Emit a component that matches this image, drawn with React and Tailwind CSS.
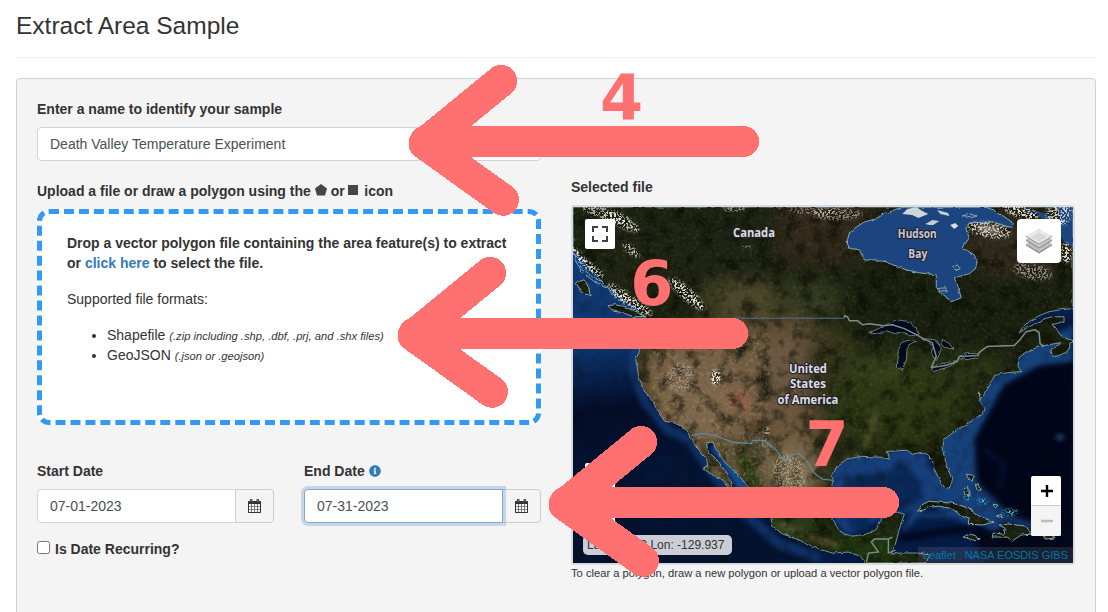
import React from "react";
import { FaInfoCircle } from "react-icons/fa";

const LAND =
  "M573 207H1074V309L1062 310 1050 312 1040 316 1030 322 1020 333 1034 325 1046 319 1053 317 1065 317 1065 322 1053 325 1058 331 1063 337 1074 341 1068 352 1060 356 1053 357 1052 350 1062 343 1050 345 1040 347 1033 350 1026 354 1020 358 1019 366 1023 372 1010 373 997 375 992 382 987 390 984 396 980 402 985 408 983 415 972 422 958 430 945 440 943 450 948 467 953 482 950 489 945 488 940 480 935 470 933 460 928 455 922 453 913 455 908 451 888 452 890 460 883 458 862 457 847 460 835 470 832 477 833 483 830 500 832 518 835 523 843 534 853 537 870 535 877 530 882 520 886 514 898 513 905 515 900 530 896 545 892 555 900 554 918 554 930 556 927 564H867L860 557 850 553 833 554 812 548 798 540 783 535 773 527 771 518 768 508 757 496 747 486 738 475 725 463 718 452 713 443 707 443 708 452 717 460 723 468 730 480 732 487 738 498 731 492 722 480 712 475 703 469 708 467 707 460 700 452 692 440 687 432 677 424 665 422 658 412 652 400 643 390 638 373 636 360 640 350 643 335 646 319 638 310 628 304 618 295 610 288 603 284 598 277 591 270 584 262 573 249Z";
const HUDSON =
  "M905 207L900 208 887 213 876 219 865 222 857 227 850 233 848 240 848 248 860 250 865 260 875 260 887 262 898 267 907 270 920 273 937 275 937 287 943 295 953 302 962 298 958 285 955 278 970 274 976 269 978 262 975 255 963 248 970 238 967 230 970 223 993 222 1013 228 1014 223 1007 218 994 210 985 207Z";
const LAKES = [
  "M870 334L878 329 887 325 897 320 910 322 915 327 920 335 912 336 903 332 895 334 887 331 876 334Z",
  "M917 341L908 346 907 360 903 371 898 368 899 350 903 343 910 340Z",
  "M923 339L935 340 942 348 940 355 937 361 932 353 934 346Z",
  "M942 341L949 343 954 349 947 349 942 345Z",
  "M932 370L938 365 957 361 957 364 947 368 935 372Z",
  "M959 357L968 354 980 354 977 358 968 360 959 359Z",
];
const ISLANDS = [
  "M608 306L615 305 625 307 637 312 646 317 634 317 622 313 613 311Z",
  "M576 283L584 280 589 288 590 296 582 293Z",
  "M918 512L922 506 930 502 940 503 953 504 967 508 980 517 995 523 983 526 969 525 970 519 960 515 952 509 940 507 930 508 924 511Z",
  "M964 538L970 535 978 537 981 540 972 541Z",
  "M1000 526L1010 525 1027 527 1032 535 1022 536 1013 542 1008 538 993 538 994 534 1005 535 1006 529Z",
  "M1044 536H1054L1056 539 1046 540Z",
  "M967 475L974 476 973 482 969 479Z",
  "M964 489L968 487 970 496 966 495Z",
  "M976 485L979 485 981 491 978 491Z",
  "M994 505L999 506 996 509Z",
  "M998 517L1003 515 1002 519Z",
];
const BORDERS =
  "M692 436L703 434 715 436 733 443 752 444 753 441 765 441 776 450 782 458 788 461 792 456 799 454 806 460 815 474 823 480 833 481";
const CENTRAL_AMERICA =
  "M867 563L869 554 879 553 872 543 875 540H889V554L896 551M889 540L893 538";

// Snow and bare rock patches: cx, cy, rx, ry, rotation, opacity
const SNOW = [
  [606, 214, 26, 6, 18, 0.7], [622, 222, 20, 6, 26, 0.8], [577, 254, 12, 3, 48, 1], [590, 267, 17, 4, 38, 0.9],
  [632, 303, 24, 5, 30, 0.9], [631, 250, 11, 4, 42, 0.8], [687, 294, 24, 6, 42, 0.9], [622, 293, 17, 4, 34, 0.7],
  [716, 378, 5, 8, 0, 1], [735, 209, 12, 2, 0, 0.7], [815, 211, 27, 4, 0, 0.4], [838, 214, 25, 6, 0, 0.5],
  [1022, 212, 18, 6, 15, 0.9], [1034, 272, 20, 8, 10, 0.5], [1060, 214, 12, 14, 40, 0.8],
  [1067, 253, 6, 10, 0, 0.9], [767, 432, 3, 3, 0, 1], [748, 247, 6, 1, 0, 0.9], [990, 230, 22, 8, 10, 0.8],
  [680, 378, 14, 16, 30, 0.3], [790, 475, 16, 22, -20, 0.35], [765, 444, 12, 5, 20, 0.3],
];

function SatelliteMap() {
  return (
    <svg className="block h-full w-full" viewBox="573 207 501 357" preserveAspectRatio="none">
      <defs>
        <linearGradient id="pacific" x1="0" y1="0" x2="0.2" y2="1">
          <stop offset="0" stopColor="#174787" />
          <stop offset="0.4" stopColor="#0c3168" />
          <stop offset="0.5" stopColor="#061a41" />
          <stop offset="0.56" stopColor="#030d27" />
          <stop offset="0.72" stopColor="#041435" />
          <stop offset="1" stopColor="#04122f" />
        </linearGradient>
        <clipPath id="land">
          <path d={LAND} />
          {ISLANDS.map((d) => <path key={d} d={d} />)}
        </clipPath>
        <filter id="b3" x="-50%" y="-50%" width="200%" height="200%" colorInterpolationFilters="sRGB"><feGaussianBlur stdDeviation="2.5" /></filter>
        <filter id="b8" x="-50%" y="-50%" width="200%" height="200%" colorInterpolationFilters="sRGB"><feGaussianBlur stdDeviation="9" /></filter>
        <filter id="coarse" x="0" y="0" width="100%" height="100%" colorInterpolationFilters="sRGB">
          <feTurbulence type="fractalNoise" baseFrequency="0.07" numOctaves="6" seed="4" />
          <feColorMatrix values="0 0 0 0 0.03  0 0 0 0 0.04  0 0 0 0 0.01  3.5 0 0 0 -1.65" />
        </filter>
        <filter id="fine" x="0" y="0" width="100%" height="100%" colorInterpolationFilters="sRGB">
          <feTurbulence type="fractalNoise" baseFrequency="0.3" numOctaves="4" seed="9" />
          <feColorMatrix values="0 0 0 0 0.68  0 0 0 0 0.6  0 0 0 0 0.44  0 4 0 0 -2" />
        </filter>
        <filter id="snow" x="-20%" y="-40%" width="140%" height="180%" colorInterpolationFilters="sRGB">
          <feGaussianBlur in="SourceGraphic" stdDeviation="1.8" result="s" />
          <feTurbulence type="fractalNoise" baseFrequency="0.48" numOctaves="3" seed="3" />
          <feColorMatrix values="0 0 0 0 1  0 0 0 0 1  0 0 0 0 1  0 0 9 0 -4.3" result="n" />
          <feComposite in="s" in2="n" operator="in" />
        </filter>
        <filter id="rough" x="-5%" y="-5%" width="110%" height="110%" colorInterpolationFilters="sRGB">
          <feTurbulence type="fractalNoise" baseFrequency="0.16" numOctaves="2" seed="8" />
          <feDisplacementMap in="SourceGraphic" scale="3.5" xChannelSelector="R" yChannelSelector="G" />
        </filter>
      </defs>

      {/* Oceans */}
      <rect x="573" y="207" width="501" height="357" fill="url(#pacific)" />
      <g filter="url(#b3)">
        <path d="M573 250L600 275 640 312 636 350 634 372 645 402 668 430 690 440 735 505 780 545 830 562" fill="none" stroke="#153f7d" strokeWidth="10" opacity="0.7" />
        <path d="M820 445H1074V564H820Z" fill="#041b46" />
        <path d="M1000 370L1074 330V564H985L965 510 970 440Z" fill="#02071b" />
        <path d="M1074 325V362L1040 366 1005 385 975 440 978 482 1012 522 985 535 930 505 940 440 960 420 1010 360Z" fill="#17417a" />
        <path d="M1074 364L1047 369 1005 389 982 432 977 448 978 485 1025 525H1074Z" fill="#01051a" />
        <path d="M832 485V466L850 456 910 450 928 456 938 490 955 498 922 510 880 520 850 536 836 524Z" fill="#173f7b" />
        <path d="M848 477L890 472 900 462 920 480 925 500 900 512 870 508 842 512 842 490Z" fill="#0a2858" />
        <path d="M845 515H870L868 532 851 532Z" fill="#0b2d62" />
        <path d="M715 445L745 490 765 510" fill="none" stroke="#174d91" strokeWidth="11" />
        <path d="M912 515L960 517 1000 530" fill="none" stroke="#174077" strokeWidth="4" />
        <path d="M900 540L940 533 980 528 1000 545" fill="none" stroke="#02081e" strokeWidth="8" />
        <path d="M905 530L920 510" fill="none" stroke="#1a4586" strokeWidth="5" />
        <path d="M975 485L1010 520 1035 528" fill="none" stroke="#123566" strokeWidth="8" />
        <path d="M985 450L1005 465 1000 490" fill="none" stroke="#07173b" strokeWidth="3" />
      </g>
      <rect x="573" y="207" width="501" height="357" filter="url(#coarse)" opacity="0.2" />

      {/* Land cover */}
      <g filter="url(#rough)">
        <g clipPath="url(#land)">
          <rect x="573" y="207" width="501" height="357" fill="#1a2010" />
          <g filter="url(#b8)">
            <rect x="573" y="200" width="290" height="100" fill="#1d2211" />
            <rect x="780" y="195" width="90" height="65" fill="#31281a" />
            <ellipse cx="1015" cy="245" rx="60" ry="32" fill="#30281b" />
            <rect x="845" y="280" width="190" height="45" fill="#18200e" />
            <ellipse cx="745" cy="296" rx="45" ry="16" fill="#4c4a2b" />
            <ellipse cx="808" cy="300" rx="34" ry="20" fill="#343a1e" />
            <ellipse cx="755" cy="338" rx="72" ry="24" fill="#5c4c33" />
            <ellipse cx="705" cy="375" rx="70" ry="42" fill="#766046" />
            <ellipse cx="705" cy="415" rx="58" ry="32" fill="#7c654a" />
            <ellipse cx="780" cy="385" rx="34" ry="50" fill="#6b5741" />
            <ellipse cx="790" cy="428" rx="34" ry="26" fill="#6a553c" />
            <ellipse cx="842" cy="385" rx="20" ry="62" fill="#35381a" />
            <ellipse cx="900" cy="400" rx="70" ry="50" fill="#2b3613" />
            <ellipse cx="890" cy="368" rx="40" ry="14" fill="#343f1b" />
            <ellipse cx="960" cy="370" rx="50" ry="18" fill="#2a3414" />
            <ellipse cx="735" cy="462" rx="22" ry="24" fill="#5d5136" />
            <ellipse cx="792" cy="472" rx="34" ry="30" fill="#7c6b4c" />
            <ellipse cx="790" cy="530" rx="34" ry="16" fill="#2d4018" />
            <ellipse cx="870" cy="548" rx="45" ry="18" fill="#1f3610" />
          </g>
          <g filter="url(#b3)">
            <path d="M640 350L646 352 648 375 658 392 680 412 675 416 655 398 640 375Z" fill="#343219" />
            <path d="M650 382L674 415" stroke="#7a6642" strokeWidth="6" />
            <ellipse cx="740" cy="402" rx="13" ry="11" fill="#8c5f49" />
            <path d="M741 455L755 485" stroke="#2b3d14" strokeWidth="12" />
            <path d="M725 352L745 348 735 362" fill="none" stroke="#2c2e1b" strokeWidth="6" />
            <path d="M765 375V402" stroke="#332f1e" strokeWidth="12" />
            <path d="M732 418L760 430" stroke="#463822" strokeWidth="5" />
            <path d="M876 412L866 450" stroke="#484a24" strokeWidth="7" />
            <path d="M600 310L640 330" stroke="#182812" strokeWidth="10" />
            <path d="M840 465L860 455" stroke="#4a4d26" strokeWidth="8" />
            <path d="M780 525L840 548" stroke="#56542c" strokeWidth="5" />
            <path d="M695 445L732 495" stroke="#786546" strokeWidth="5" />
          </g>
          <rect x="573" y="207" width="501" height="357" filter="url(#coarse)" opacity="0.55" />
          <rect x="573" y="207" width="501" height="357" filter="url(#fine)" opacity="0.1" />
          <rect x="650" y="335" width="120" height="155" filter="url(#fine)" opacity="0.25" />
        </g>
        <path d={HUDSON} fill="#1c4580" />
        <path d="M1020 207L1038 214 1055 228 1066 243 1074 247V207H1058L1062 225 1045 213Z" fill="#1c4580" />
        <path d="M700 234L715 231 742 222 728 225 708 231Z" fill="#0d1914" />
        {LAKES.map((d) => <path key={d} d={d} fill="#030a1b" stroke="#8fa9a6" strokeWidth="0.7" />)}
        <g fill="none" stroke="#93b6b6" strokeWidth="0.9" strokeLinejoin="round">
          <path d={LAND} opacity="0.85" />
          <path d={HUDSON} />
          {ISLANDS.map((d) => <path key={d} d={d} />)}
          <path d="M953 267L958 264 961 268 956 270ZM964 216L970 214 978 216 971 218ZM938 289L946 288 948 292 943 292ZM980 393L981 399 978 401M580 266L592 277 602 282 612 294 622 299M586 275L596 283 606 288M575 260L583 273" />
        </g>
      </g>

      {/* Snow cover */}
      {SNOW.map(([x, y, rx, ry, a, o]) => (
        <g key={`${x}-${y}`} filter="url(#snow)" fill="#efece4" opacity={o}>
          <ellipse cx={x} cy={y} rx={rx} ry={ry} transform={`rotate(${a} ${x} ${y})`} />
        </g>
      ))}
      <g fill="#f0eee9">
        <path d="M908 209L917 207 923 211 929 214 919 218 913 215 903 214Z" opacity="0.85" />
        <path d="M938 210L949 213 950 216 941 214Z" opacity="0.8" />
        <path d="M926 224L933 220 940 221 934 225 930 225Z" opacity="0.8" />
        <path d="M951 225L956 223 959 226 955 229Z" opacity="0.9" />
      </g>
      <path d="M974 226L985 225 998 229 1003 233 990 233 980 230Z" fill="#d9d5cc" opacity="0.6" filter="url(#b3)" />
      <g fill="#51c4cf" filter="url(#snow)">
        <ellipse cx="968" cy="497" rx="3" ry="4" /><ellipse cx="984" cy="502" rx="5" ry="3" />
        <ellipse cx="1011" cy="513" rx="8" ry="3" />
      </g>
      <ellipse cx="1061" cy="438" rx="4" ry="2.5" fill="#34557f" filter="url(#b3)" />

      {/* Borders */}
      <path d="M735 318.5H845" stroke="#51728a" strokeWidth="1" />
      <path d={BORDERS} fill="none" stroke="#5f8ba0" strokeWidth="1.1" />
      <path d={CENTRAL_AMERICA} fill="none" stroke="#7f8d8a" strokeWidth="1.4" />
      <path d="M845 318V316L848 317 850 321 858 321 863 325 870 324 884 326 893 325 905 329 917 335 924 339 933 343 937 357 932 368 946 366 958 362 960 357 978 356 981 352 988 347 1015 346 1021 340 1027 332 1036 330 1040 333 1041 344 1045 347" fill="none" stroke="#7f8d8a" strokeWidth="1.5" strokeLinejoin="round" />

      <g fontFamily='"Open Sans", "Noto Sans", sans-serif' fontWeight="700" fontSize="12" textAnchor="middle" fill="#dedce0" stroke="#25252b" strokeWidth="2.4" strokeLinejoin="round" paintOrder="stroke">
        <text x="754.4" y="237.5" textLength="42" lengthAdjust="spacingAndGlyphs">Canada</text>
        <text x="918" y="238.5" textLength="39" lengthAdjust="spacingAndGlyphs" fill="#c5c5da">Hudson</text>
        <text x="918.5" y="258.5" textLength="19" lengthAdjust="spacingAndGlyphs" fill="#c5c5da">Bay</text>
        <text x="808.4" y="373" textLength="38" lengthAdjust="spacingAndGlyphs">United</text>
        <text x="808.4" y="389" textLength="36" lengthAdjust="spacingAndGlyphs">States</text>
        <text x="808.4" y="405" textLength="61" lengthAdjust="spacingAndGlyphs">of America</text>
      </g>
    </svg>
  );
}

function CalendarIcon() {
  return (
    <svg className="h-[14px] w-[13px]" viewBox="0 0 13 14">
      <path fillRule="evenodd" fill="#333" d="M1 2H2V1.2C2 .5 2.4 0 3 0h.5C4.100 0 4.500.5 4.500 1.200V2h4v-.8C8.500.5 8.900 0 9.500 0h.5c.6 0 1 .5 1 1.200V2h1c.6 0 1 .4 1 1v10c0 .6-.4 1-1 1H1c-.6 0-1-.4-1-1V3c0-.6.4-1 1-1ZM1 5v2.200h2.200V5ZM3.800 5v2.200h2.400V5ZM6.800 5v2.200h2.400V5ZM9.800 5v2.200H12V5ZM1 7.800v2.400h2.200V7.800ZM3.800 7.800v2.400h2.400V7.800ZM6.800 7.800v2.400h2.400V7.800ZM9.800 7.800v2.400H12V7.800ZM1 10.800V13h2.200v-2.200ZM3.800 10.800V13h2.400v-2.200ZM6.800 10.800V13h2.400v-2.200ZM9.800 10.800V13H12v-2.200Z" />
      <path d="M3.250 .9v2.300M9.750 .9v2.300" stroke="#bbb" strokeWidth="0.6" />
    </svg>
  );
}

function DateField({ label, value, focused, info }) {
  return (
    <div className="w-[237px]">
      <div className="flex h-5 items-center gap-1 font-bold">
        <span>{label}</span>
        {info && <FaInfoCircle className="h-3 w-3 text-[#337ab7]" />}
      </div>
      <div className="mt-2 flex h-[34px]">
        <div
          className={
            focused
              ? "z-10 flex w-[199px] items-center rounded-l border border-[#80a8d5] bg-white pl-3 text-[#495057] shadow-[0_0_0_3px_rgba(51,110,170,0.22)]"
              : "flex w-[199px] items-center rounded-l border border-[#ced4da] bg-white pl-3 text-[#495057]"
          }
        >
          {value}
        </div>
        <div className="-ml-px flex w-[39px] items-center justify-center rounded-r border border-[#ccc] bg-[#f4f4f4] pr-px">
          <CalendarIcon />
        </div>
      </div>
    </div>
  );
}

function MapPanel() {
  return (
    <div className="relative h-[360px] w-[504px] rounded-[3px] border-2 border-[#d9dbdc]">
      <SatelliteMap />
      <div className="absolute top-[12px] left-[12px] flex h-[30px] w-[30px] items-center justify-center rounded-[2px] bg-white">
        <svg width="16" height="16" viewBox="0 0 16 16" fill="none" stroke="#404040" strokeWidth="2">
          <path d="M1 6V1H6M10 1H15V6M15 10V15H10M6 15H1V10" />
        </svg>
      </div>
      <div className="absolute top-[12px] right-[12px] flex h-11 w-11 items-center justify-center rounded-[4px] bg-white">
        <svg width="26" height="26" viewBox="0 0 26 26">
          <path d="M0 17.500L13 25.500 26 17.500V16L13 23 0 16Z" fill="#8a8a8a" />
          <path d="M0 16L13 8 26 16 13 24Z" fill="#bdbdbd" />
          <path d="M0 13L13 20.500 26 13V11.500H0Z" fill="#909090" />
          <path d="M0 11.500L13 4 26 11.500 13 19.500Z" fill="#c4c4c4" />
          <path d="M0 9L13 16.500 26 9V7.500H0Z" fill="#999" />
          <path d="M0 8L13 0.500 26 8 13 15.500Z" fill="#e8e8e8" />
          <path d="M5 9L13 4.500 21 9 13 13.500Z" fill="#d8d8d8" />
        </svg>
      </div>
      <div className="absolute top-[256px] left-[12px] h-[60px] w-[30px] rounded-[2px] bg-white" />
      <div className="absolute right-[12px] bottom-[27px] flex h-[60px] w-[30px] flex-col overflow-hidden rounded-[2px] bg-white">
        <div className="flex h-[30px] items-center justify-center border-b border-[#ccc] pl-px">
          <svg width="12" height="12" viewBox="0 0 12 12"><path d="M0 6H12M6 0V12" stroke="#000" strokeWidth="2.4" /></svg>
        </div>
        <div className="flex h-[30px] items-center justify-center bg-[#f4f4f4] pl-px">
          <svg width="12" height="12" viewBox="0 0 12 12"><path d="M0 6H12" stroke="#bbb" strokeWidth="2.4" /></svg>
        </div>
      </div>
      <div className="absolute bottom-[8px] left-[10px] flex h-5 w-[149px] items-center rounded-[5px] bg-[#e2e3e8]/90 pl-1 text-[12px] whitespace-pre text-[#333]">
        Lat: 23.563 Lon: -129.937
      </div>
      <div className="absolute right-0 bottom-0 h-4 w-[155px] bg-white/10 pr-[5px] text-right text-[11px] leading-[17px] whitespace-nowrap text-[#333]">
        <span className="text-[#0078a8]">Leaflet</span> | <span className="text-[#0078a8]">NASA EOSDIS GIBS</span>
      </div>
    </div>
  );
}

const ARROW_OFFSETS = [
  { x: 0, y: 0 },
  { x: -11, y: 192 },
  { x: 140, y: 361 },
];

function Annotations() {
  return (
    <svg className="pointer-events-none absolute inset-0 z-20" width="1108" height="612" viewBox="0 0 1108 612">
      {ARROW_OFFSETS.map(({ x, y }) => (
        <g key={y} transform={`translate(${x} ${y})`} fill="none" stroke="#ff7070" strokeLinecap="round" strokeLinejoin="round" shapeRendering="crispEdges">
          <path d="M425 141.500H743.600" strokeWidth="31" />
          <path d="M501 81L424.600 143.500 503 199.800" strokeWidth="32" />
        </g>
      ))}
      <g fill="#ff7070" fontFamily='"DejaVu Sans", sans-serif' fontWeight="700" fontSize="62">
        <text x="600" y="119">4</text>
        <text x="630.200" y="305">6</text>
        <text x="805.500" y="466">7</text>
      </g>
    </svg>
  );
}

export default function App() {
  return (
    <main className="relative h-[612px] w-[1108px] overflow-hidden bg-white pr-3 pl-4 font-['Liberation_Sans',Arial,sans-serif] text-[14px] leading-5 text-[#333]">
      <h1 className="flex h-[58px] items-start border-b border-[#eee] pt-[13px] text-[24.5px] leading-[26px]">Extract Area Sample</h1>
      <section className="mt-5 flex h-[560px] gap-[30px] rounded border border-[#ced1d4] bg-[#f4f4f4] pt-5 pl-5">
        <div className="w-[504px]">
          <div className="font-bold">Enter a name to identify your sample</div>
          <div className="mt-2 flex h-[34px] items-center rounded border border-[#ced4da] bg-white pl-3 text-[#495057]">
            Death Valley Temperature Experiment
          </div>
          <div className="mt-5 flex h-5 items-center font-bold">
            <span>Upload a file or draw a polygon using the</span>
            <svg className="mr-[4px] mb-[2px] ml-[4px]" width="12" height="12" viewBox="0 0 12 12"><path d="M6 0L12 4.500 10 11.500H2L0 4.500Z" fill="#464646" /></svg>
            <span>or</span>
            <span className="mr-[6.5px] mb-[2px] ml-[3px] h-[10px] w-[10px] bg-[#464646]" />
            <span>icon</span>
          </div>
          <div className="mt-2 h-[216px] rounded-[12px] border-[5px] border-dashed border-[#3399f3] bg-white pt-[19px] pl-[25px]">
            <p className="font-bold">
              Drop a vector polygon file containing the area feature(s) to extract<br />
              or <span className="text-[#337ab7]">click here</span> to select the file.
            </p>
            <p className="mt-4">Supported file formats:</p>
            <ul className="mt-4 list-disc pl-10">
              <li className="h-5">Shapefile <em className="text-[11.2px] leading-none">(.zip including .shp, .dbf, .prj, and .shx files)</em></li>
              <li className="h-5">GeoJSON <em className="text-[11.2px] leading-none">(.json or .geojson)</em></li>
            </ul>
          </div>
          <div className="mt-9 flex gap-[30px]">
            <DateField label="Start Date" value="07-01-2023" />
            <DateField label="End Date" value="07-31-2023" focused info />
          </div>
          <label className="mt-4 flex items-center gap-[5px] font-bold">
            <input type="checkbox" className="mb-[3px] h-[13px] w-[13px]" />
            Is Date Recurring?
          </label>
        </div>
        <div className="w-[504px] pt-[78px]">
          <div className="mb-2 font-bold">Selected file</div>
          <MapPanel />
          <p className="text-[11.2px] leading-[16px]">To clear a polygon, draw a new polygon or upload a vector polygon file.</p>
        </div>
      </section>
      <Annotations />
    </main>
  );
}
